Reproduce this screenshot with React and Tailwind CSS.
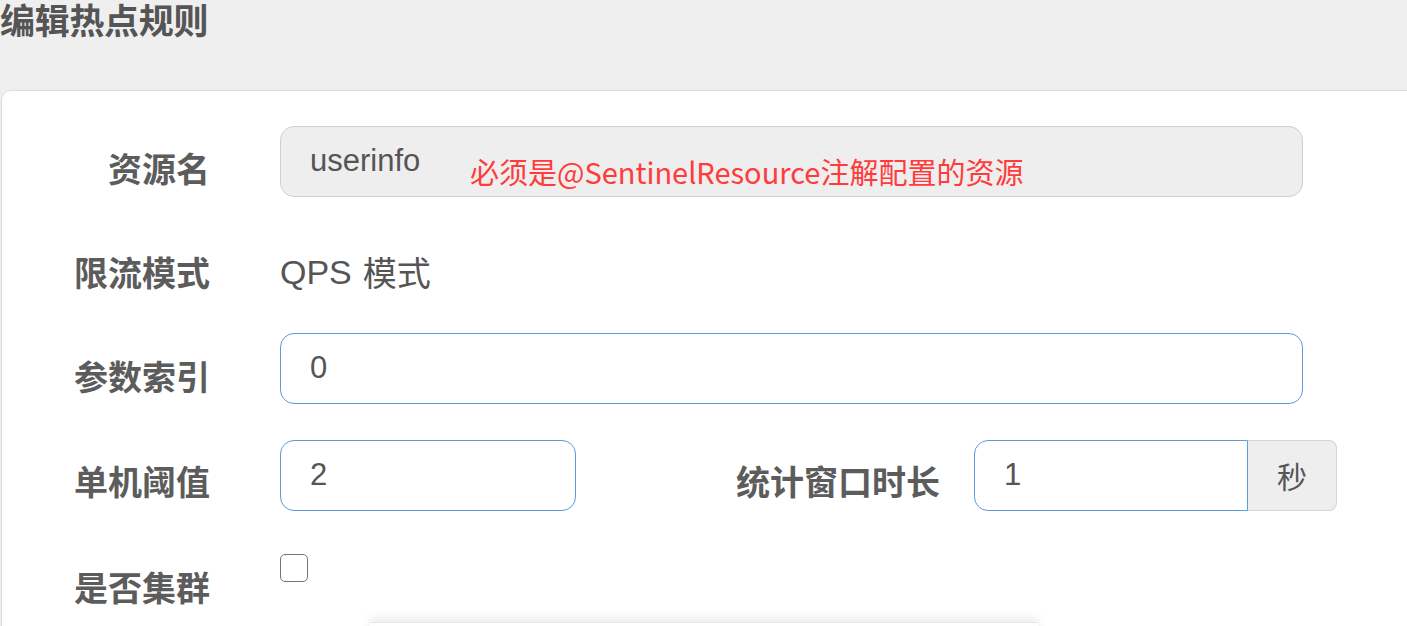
import React from "react";

const latin = "font-['Liberation_Sans','Noto_Sans_CJK_SC',sans-serif]";
const cjk = "font-['Noto_Sans_CJK_SC','Liberation_Sans',sans-serif]";

function Label({ children, className = "" }) {
  return (
    <div className={`flex h-[71px] shrink-0 items-center justify-end text-[34px] font-bold leading-none text-[#5c5c5c] ${cjk} ${className}`}>
      {children}
    </div>
  );
}

export default function App() {
  return (
    <div className={`relative h-[626px] w-full overflow-hidden bg-[#efefef] ${latin}`}>
      {/* header */}
      <div className="h-[90px]">
        <h4 className={`text-[35px] font-bold leading-[38px] tracking-[-0.3px] text-[#555] ${cjk}`}>编辑热点规则</h4>
      </div>

      {/* form card */}
      <div className="ml-[1px] -mr-[20px] h-[600px] rounded-tl-[10px] border border-[#dcdcdc] bg-white pt-[35px]">
        {/* 资源名 */}
        <div className="flex items-start">
          <Label className="w-[208px] pt-[13px]">资源名</Label>
          <div className="relative ml-[70px] flex h-[71px] w-[1023px] items-center rounded-[14px] border border-[#cfcfcf] bg-[#eeeeee] pl-[29px] text-[31px] text-[#555]">
            userinfo
            <span className={`absolute left-[189px] top-[30px] text-[29px] leading-none text-[#ff3b3b] ${cjk}`}>
              必须是@SentinelResource注解配置的资源
            </span>
          </div>
        </div>

        {/* 限流模式 */}
        <div className="mt-[33px] flex items-start">
          <Label className="w-[208px] pt-[12px]">限流模式</Label>
          <div className="ml-[70px] flex h-[71px] items-center pt-[12px] text-[34px] leading-none text-[#555]">
            QPS <span className={`ml-[11px] ${cjk}`}>模式</span>
          </div>
        </div>

        {/* 参数索引 */}
        <div className="mt-[32px] flex items-start">
          <Label className="w-[208px] pt-[14px]">参数索引</Label>
          <div className="ml-[70px] flex h-[71px] w-[1023px] items-center rounded-[14px] border border-[#5d9cd8] bg-white pl-[29px] text-[31px] text-[#555]">
            0
          </div>
        </div>

        {/* 单机阈值 / 统计窗口时长 */}
        <div className="mt-[36px] flex items-start">
          <Label className="w-[208px] pt-[10px]">单机阈值</Label>
          <div className="ml-[70px] flex h-[71px] w-[296px] items-center rounded-[14px] border border-[#5d9cd8] bg-white pl-[29px] text-[31px] text-[#555]">
            2
          </div>
          <Label className="w-[364px] pt-[10px]">统计窗口时长</Label>
          <div className="ml-[34px] flex h-[71px]">
            <div className="flex w-[274px] items-center rounded-l-[14px] border border-[#5d9cd8] bg-white pl-[29px] text-[31px] text-[#555]">
              1
            </div>
            <div className={`flex w-[89px] items-center justify-center rounded-r-[8px] border border-l-0 border-[#d4d4d4] bg-[#eeeeee] text-[30px] text-[#555] ${cjk}`}>
              秒
            </div>
          </div>
        </div>

        {/* 是否集群 */}
        <div className="mt-[34px] flex items-start">
          <Label className="h-[83px] w-[208px] pt-[0px]">是否集群</Label>
          <div className="ml-[70px] mt-[9px] h-[28px] w-[28px] rounded-[5px] border-[1.5px] border-[#767676] bg-white" />
        </div>
      </div>

      {/* popup edge peeking at the bottom */}
      <div className="absolute left-[370px] top-[622px] h-[30px] w-[668px] border-t border-[#e6e6e6] bg-white shadow-[0_-4px_12px_rgba(0,0,0,0.08)]" />
    </div>
  );
}
